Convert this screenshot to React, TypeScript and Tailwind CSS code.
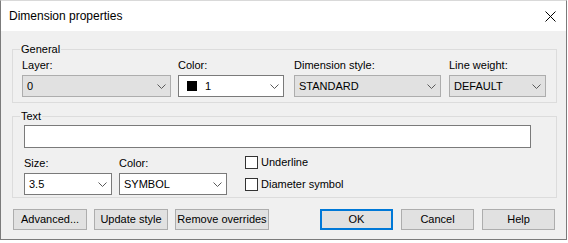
import type { ReactNode } from "react";

const font = "font-['Segoe_UI','Liberation_Sans',Arial,sans-serif] text-[11px]";

function Chevron() {
  return (
    <svg width="9" height="5" viewBox="0 0 9 5" className="shrink-0">
      <path d="M0.5 0.5 L4.5 4.5 L8.5 0.5" fill="none" stroke="#5a5a5a" strokeWidth="1" />
    </svg>
  );
}

function Combo({
  width,
  value,
  white = false,
  swatch = false,
}: {
  width: string;
  value: string;
  white?: boolean;
  swatch?: boolean;
}) {
  return (
    <div
      className={`${width} h-[22px] flex items-center pl-[4px] pr-[4px] border ${
        white ? "bg-white border-[#7a7a7a]" : "bg-[#e1e1e1] border-[#adadad]"
      }`}
    >
      {swatch && <span className="w-[10px] h-[10px] bg-black ml-[4px] mr-[8px]" />}
      <span className="flex-1 text-black">{value}</span>
      <Chevron />
    </div>
  );
}

function Field({ label, ml, children }: { label: string; ml: string; children: ReactNode }) {
  return (
    <div className={`flex flex-col ${ml}`}>
      <span className="h-[16px] leading-[16px] mb-[2px]">{label}</span>
      {children}
    </div>
  );
}

function Button({ label, width, primary = false }: { label: string; width: string; primary?: boolean }) {
  return (
    <button
      className={`${width} h-[21px] bg-[#e1e1e1] text-black leading-none ${
        primary ? "border-2 border-[#0078d7]" : "border border-[#adadad]"
      }`}
    >
      {label}
    </button>
  );
}

function Check({ label }: { label: string }) {
  return (
    <label className="flex items-center h-[13px] gap-[3px]">
      <span className="w-[13px] h-[13px] border border-[#333333] bg-white" />
      <span>{label}</span>
    </label>
  );
}

export default function App() {
  return (
    <div className={`w-[568px] h-[243px] bg-white ${font} text-black`}>
      <div className="w-[567px] h-[240px] border border-[#7b7b7b] border-t-[#d9d9d9] flex flex-col bg-[#f0f0f0]">
        {/* Title bar */}
        <div className="h-[30px] bg-white flex items-center justify-between pl-[8px] pr-[10px]">
          <span className="text-[12px]">Dimension properties</span>
          <svg width="11" height="11" viewBox="0 0 11 11">
            <path d="M0.5 0.5 L10.5 10.5 M10.5 0.5 L0.5 10.5" stroke="#000" strokeWidth="1" />
          </svg>
        </div>

        <div className="flex flex-col pl-[11px] pt-[11px]">
          {/* General */}
          <fieldset className="w-[545px] h-[61px] border border-[#dcdcdc] pl-[9px] pt-[1px]">
            <legend className="-ml-[2px] px-[1px] leading-[14px]">General</legend>
            <div className="flex">
              <Field label="Layer:" ml="">
                <Combo width="w-[149px]" value="0" />
              </Field>
              <Field label="Color:" ml="ml-[7px]">
                <Combo width="w-[106px]" value="1" white swatch />
              </Field>
              <Field label="Dimension style:" ml="ml-[10px]">
                <Combo width="w-[147px]" value="STANDARD" />
              </Field>
              <Field label="Line weight:" ml="ml-[8px]">
                <Combo width="w-[97px]" value="DEFAULT" />
              </Field>
            </div>
          </fieldset>

          {/* Text */}
          <fieldset className="mt-[6px] w-[545px] h-[89px] border border-[#dcdcdc] pl-[11px] pt-[2px]">
            <legend className="-ml-[4px] px-[1px] leading-[14px]">Text</legend>
            <div className="w-[507px] h-[23px] bg-white border border-[#7a7a7a]" />
            <div className="flex mt-[7px]">
              <Field label="Size:" ml="">
                <Combo width="w-[88px]" value="3.5" white />
              </Field>
              <Field label="Color:" ml="ml-[7px]">
                <Combo width="w-[108px]" value="SYMBOL" white />
              </Field>
              <div className="ml-[18px] flex flex-col gap-[9px] pt-[1px]">
                <Check label="Underline" />
                <Check label="Diameter symbol" />
              </div>
            </div>
          </fieldset>

          {/* Buttons */}
          <div className="flex mt-[11px] pl-[1px]">
            <Button label="Advanced..." width="w-[74px]" />
            <div className="ml-[7px]">
              <Button label="Update style" width="w-[74px]" />
            </div>
            <div className="ml-[7px]">
              <Button label="Remove overrides" width="w-[94px]" />
            </div>
            <div className="ml-[51px]">
              <Button label="OK" width="w-[73px]" primary />
            </div>
            <div className="ml-[8px]">
              <Button label="Cancel" width="w-[73px]" />
            </div>
            <div className="ml-[8px]">
              <Button label="Help" width="w-[73px]" />
            </div>
          </div>
        </div>
      </div>
    </div>
  );
}
